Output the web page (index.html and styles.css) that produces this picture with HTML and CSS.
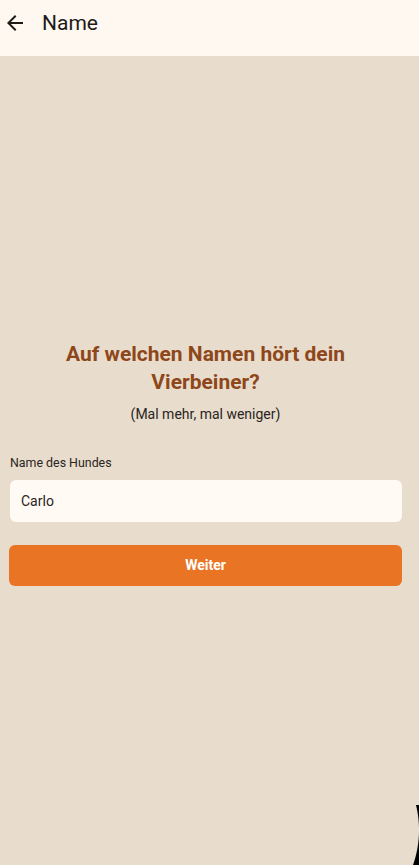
FILE: index.html
```html
<!DOCTYPE html>
<html lang="de">

<head>
  <meta charset="UTF-8">
  <meta name="viewport" content="width=device-width, initial-scale=1.0">
  <title>Name</title>
  <link rel="stylesheet" href="styles.css">
</head>

<body>
  <div class="screen">
    <header class="app-bar">
      <button class="back" aria-label="Zurück">
        <svg width="24" height="24" viewBox="0 0 24 24">
          <path d="M20 11H7.83l5.59-5.59L12 4l-8 8 8 8 1.41-1.41L7.83 13H20v-2z" fill="#1d1b18" />
        </svg>
      </button>
      <h1 class="title">Name</h1>
    </header>

    <main class="content">
      <div class="form">
        <h2 class="question">Auf welchen Namen hört dein Vierbeiner?</h2>
        <p class="hint">(Mal mehr, mal weniger)</p>

        <label class="label" for="dogName">Name des Hundes</label>
        <input class="field" id="dogName" type="text" value="Carlo">

        <button class="next">Weiter</button>
      </div>
    </main>

    <!-- rounded display corner -->
    <div class="corner"></div>
  </div>
</body>

</html>
```

FILE: styles.css
```css
* {
  box-sizing: border-box;
}

body {
  margin: 0;
  background-color: #e8dccc;
  font-family: Roboto, "Noto Sans", sans-serif;
}

.screen {
  position: relative;
  display: flex;
  flex-direction: column;
  height: 865px;
  overflow: hidden;
}

.app-bar {
  display: flex;
  align-items: center;
  height: 56px;
  padding: 0 0 10px 3px;
  background-color: #fff8f1;
}

.back {
  display: flex;
  padding: 0;
  border: none;
  background: none;
  cursor: pointer;
}

.title {
  margin: 0 0 0 15px;
  font-size: 21px;
  font-weight: 400;
  color: #1d1b18;
}

.content {
  flex: 1;
  display: flex;
  align-items: center;
  padding: 4px 17px 0 9px;
}

.form {
  width: 100%;
  display: flex;
  flex-direction: column;
}

.question {
  margin: 0 30px;
  font-size: 21px;
  font-weight: 700;
  line-height: 28px;
  text-align: center;
  color: #8e471a;
}

.hint {
  margin: 8px 0 0;
  font-size: 14px;
  line-height: 20px;
  text-align: center;
  color: #2a2522;
}

.label {
  margin: 31px 0 0 1px;
  font-size: 12.4px;
  line-height: 16px;
  color: #2a2522;
}

.field {
  margin: 9px 0 0 1px;
  height: 42px;
  padding: 0 11px;
  border: none;
  border-radius: 6px;
  background-color: #fffaf4;
  font-family: inherit;
  font-size: 14px;
  color: #2a2522;
  outline: none;
}

.next {
  margin-top: 23px;
  height: 41px;
  border: none;
  border-radius: 6px;
  background-color: #e87424;
  color: #fff;
  font-family: inherit;
  font-size: 14px;
  font-weight: 700;
  cursor: pointer;
}

.corner {
  position: absolute;
  right: 0;
  bottom: 0;
  width: 40px;
  height: 60px;
  background: radial-gradient(circle 105px at -65px 25px, transparent 104.5px, #000 105.5px);
  pointer-events: none;
}
```
